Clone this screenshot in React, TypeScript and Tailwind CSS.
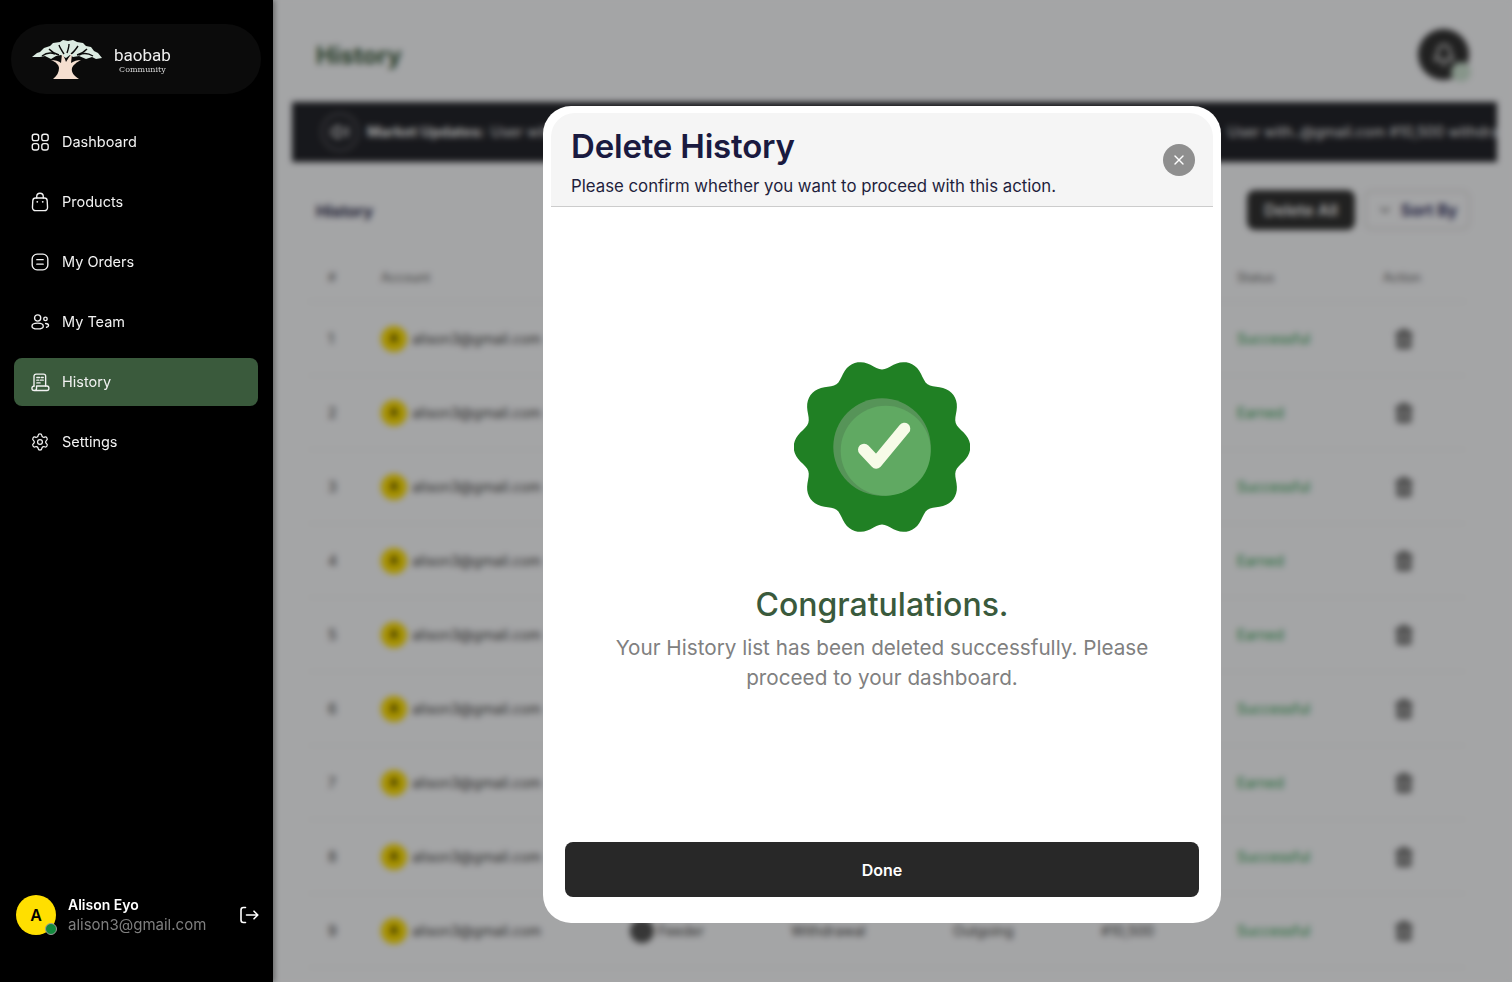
import { X, Trash2, ChevronDown, Bell, Volume2 } from "lucide-react";

const badgePath = (() => {
  const pts: string[] = [];
  for (let i = 0; i < 360; i += 2) {
    const t = (i * Math.PI) / 180;
    const r = 83.4 + 5.4 * Math.cos(10 * t) - 0.5 * Math.cos(20 * t);
    pts.push(`${(88 + r * Math.cos(t)).toFixed(2)} ${(85 + r * Math.sin(t)).toFixed(2)}`);
  }
  return `M${pts.join("L")}Z`;
})();

const icons = {
  dashboard: (
    <>
      <rect x="2.5" y="2.5" width="7" height="7" rx="2.4" />
      <rect x="13" y="2.5" width="7" height="7" rx="2.4" />
      <rect x="2.5" y="12.8" width="7" height="7" rx="2.4" />
      <rect x="13" y="12.8" width="7" height="7" rx="2.4" />
    </>
  ),
  products: (
    <>
      <path d="M6.2 6.6h9.6c1.7 0 3 1.2 3.1 2.9l.4 7.4c.1 2-1.4 3.6-3.4 3.6H6.1c-2 0-3.5-1.6-3.4-3.6l.4-7.4c.1-1.7 1.4-2.9 3.1-2.9Z" />
      <path d="M7.4 6.6V5a3.6 3.6 0 0 1 7.2 0v1.6" />
      <path d="M8 10.8h.01M14 10.8h.01" strokeWidth="2" />
    </>
  ),
  orders: (
    <>
      <rect x="2.4" y="2.4" width="17.2" height="17.2" rx="5.4" />
      <path d="M7.5 8.4h7M7.5 13.4h7" />
    </>
  ),
  team: (
    <>
      <circle cx="8.4" cy="6.6" r="3.4" />
      <path d="M2.2 15.6c0-2.2 2.8-3.4 6.2-3.4s6.2 1.2 6.2 3.4-2.8 3-6.2 3-6.2-.8-6.2-3Z" />
      <circle cx="17" cy="7.6" r="1.9" />
      <path d="M17.2 12.6c2 .1 3.2 1 3.2 2.2 0 1-.8 1.7-2.2 2" />
    </>
  ),
  history: (
    <>
      <path d="M4.4 15.6V4.6c0-1.4.9-2.3 2.3-2.3h8.2c1.4 0 2.3.9 2.3 2.3v10.8" />
      <path d="M4.6 20.4h14c1.3 0 2.2-.9 2.2-2.5 0-1.5-.9-2.5-2.2-2.5H7.2v2.6c0 1.4-1.2 2.4-2.5 2.4s-2.6-1-2.6-2.4 1-2.5 2.3-2.5" />
      <path d="M7.5 6h3M12.4 6h2.2M7.5 9h2M11.4 9h3.2M7.5 12h3.6" />
    </>
  ),
  settings: (
    <g transform="translate(.3 .3) scale(.89)">
      <circle cx="12" cy="12" r="3" />
      <path d="M9.671 4.136a2.34 2.34 0 0 1 4.659 0 2.34 2.34 0 0 0 3.319 1.915 2.34 2.34 0 0 1 2.33 4.033 2.34 2.34 0 0 0 0 3.831 2.34 2.34 0 0 1-2.33 4.033 2.34 2.34 0 0 0-3.319 1.915 2.34 2.34 0 0 1-4.659 0 2.34 2.34 0 0 0-3.32-1.915 2.34 2.34 0 0 1-2.33-4.033 2.34 2.34 0 0 0 0-3.831A2.34 2.34 0 0 1 6.35 6.051a2.34 2.34 0 0 0 3.32-1.915" />
    </g>
  ),
};

const NavItem = ({
  icon,
  label,
  active,
}: {
  icon: keyof typeof icons;
  label: string;
  active?: boolean;
}) => (
  <div
    className={`h-12 flex items-center gap-3 pl-4 rounded-lg text-[14.5px] text-[#f2f2f2] ${
      active ? "bg-[#3a5a3c]" : ""
    }`}
  >
    <svg
      viewBox="0 0 22 22"
      fill="none"
      stroke="currentColor"
      strokeWidth="1.5"
      strokeLinecap="round"
      strokeLinejoin="round"
      className="w-5 h-5 shrink-0"
    >
      {icons[icon]}
    </svg>
    <span>{label}</span>
  </div>
);

const Logo = () => (
  <svg viewBox="0 0 70 40" className="w-[70px] h-10 shrink-0">
    {/* canopy */}
    <path
      d="M0 18 5 14l3-1 4-4 6-2 3-3 7-1 3-2 5 1 5-1 4 2 6 1 3 3 5 1 3 4 4 2 4 5-6 1-4-2-6 2-7-3-6 1-3-2-4 3-5-3-5 1-5 3-6-3-5 1-4 0Z"
      fill="#dcebe2"
    />
    {/* dark gaps in the foliage */}
    <path
      d="M10 17c4-3 8-4 13-2M17 10c3 3 6 5 10 6M27 6c1 3 3 6 5 9M37 5c0 3-1 6-2 9M46 7c-2 3-4 6-7 8M55 10c-3 3-6 5-10 6M61 17c-5-3-10-3-14-1"
      stroke="#0b0b0b"
      strokeWidth="1.4"
      fill="none"
    />
    {/* trunk */}
    <path
      d="M21 40c4-3 6-7 6-11 0-3-3-6-8-8 4 0 8 1 10 3l1-9c2 2 3 5 4 8 2-3 3-6 6-8l-1 9c3-2 6-3 10-3-4 2-8 5-9 8-1 4 2 8 7 11Z"
      fill="#f5dfd0"
    />
  </svg>
);

const rows = [
  "Successful",
  "Earned",
  "Successful",
  "Earned",
  "Earned",
  "Successful",
  "Earned",
  "Successful",
  "Successful",
];

export default function App() {
  return (
    <div className="flex h-screen w-full overflow-hidden bg-white font-['Inter',sans-serif]">
      <aside className="relative z-20 w-[273px] shrink-0 h-full bg-black flex flex-col shadow-[2px_0_5px_rgba(0,0,0,0.35)]">
        <div className="mt-6 ml-[11px] w-[250px] h-[70px] rounded-full bg-[#0b0b0b] flex items-center pl-[21px] gap-3">
          <Logo />
          <div className="flex flex-col items-center text-[#eeeeee] leading-none mt-[3px]">
            <span className="font-['Roboto',sans-serif] text-[17px]">baobab</span>
            <span className="font-['DejaVu_Serif',serif] text-[8px] mt-[2px] text-[#d8d8d8]">Community</span>
          </div>
        </div>

        <nav className="mt-6 mx-[14px] w-[244px] flex flex-col gap-3">
          <NavItem icon="dashboard" label="Dashboard" />
          <NavItem icon="products" label="Products" />
          <NavItem icon="orders" label="My Orders" />
          <NavItem icon="team" label="My Team" />
          <NavItem icon="history" label="History" active />
          <NavItem icon="settings" label="Settings" />
        </nav>

        <div className="mt-auto mb-[47px] ml-4 mr-[14px] flex items-center">
          <div className="relative w-10 h-10 rounded-full bg-[#ffdf00] flex items-center justify-center text-black font-semibold text-base">
            A
            <span className="absolute right-[-1px] bottom-0 w-3 h-3 rounded-full bg-[#128a3e] border border-[#9a9a9a]" />
          </div>
          <div className="ml-3 flex flex-col">
            <span className="text-[14px] leading-5 font-semibold text-white">Alison Eyo</span>
            <span className="text-[15px] leading-5 text-[#7f7f7f]">alison3@gmail.com</span>
          </div>
          <svg
            viewBox="0 0 20 20"
            fill="none"
            stroke="#fff"
            strokeWidth="1.6"
            strokeLinecap="round"
            strokeLinejoin="round"
            className="ml-auto w-5 h-5"
          >
            <path d="M6.5 2.5H4.4C3.1 2.5 2 3.6 2 4.9v10.2c0 1.3 1.1 2.4 2.4 2.4h2.1" />
            <path d="M7.5 10h11M15 6.2l3.8 3.8-3.8 3.8" />
          </svg>
        </div>
      </aside>

      <main className="relative flex-1 min-w-0 h-full overflow-hidden bg-[#fcfdff]">
        <header className="h-[102px] flex items-center pl-[43px] pr-[43px]">
          <h1 className="text-[24px] font-bold text-[#3a5a3c] mt-[10px]">History</h1>
          <div className="relative ml-auto mt-[7px] w-[51px] h-[51px] rounded-full bg-[#333] flex items-center justify-center">
            <Bell className="size-6 text-white" />
            <span className="absolute right-[-2px] bottom-[-2px] w-5 h-5 rounded-full bg-[#cfe5d4]" />
          </div>
        </header>

        <div className="ml-[19px] mr-[15px] h-[60px] bg-[#24252b] flex items-center overflow-hidden whitespace-nowrap pl-7 text-[14.5px] text-white">
          <span className="shrink-0 w-10 h-10 rounded-full border-4 border-[#44454a] flex items-center justify-center">
            <Volume2 className="size-5 text-white" />
          </span>
          <span className="shrink-0 ml-[7px] font-bold">Market Updates:</span>
          <span className="shrink-0 ml-[6px] w-[737px]">User with..@gmail.com #10,500 withdrawal</span>
          <span className="shrink-0">User with..@gmail.com #10,500 withdrawal</span>
        </div>

        <div className="mt-7 pl-[43px] pr-[42px] h-10 flex items-center">
          <h2 className="text-[16px] font-bold text-[#2a2a4a] mt-[2px]">History</h2>
          <button className="ml-auto w-[108px] h-10 rounded-lg bg-[#333] text-white text-[16px] font-semibold">
            Delete All
          </button>
          <button className="ml-[9px] w-[106px] h-10 rounded-lg border-2 border-[#e4e4e4] bg-[#fcfdff] text-[#1a1a50] text-[16px] font-semibold flex items-center justify-center gap-2">
            <ChevronDown className="size-4 text-[#555]" />
            Sort By
          </button>
        </div>

        <div className="mt-[25px] ml-[35px] mr-[46px] text-[14px] text-[#444]">
          <div className="h-[47px] grid grid-cols-[53px_249px_161px_162px_148px_136px_1fr] items-center pl-5 text-[12.5px] text-[#666] border-b border-[#f0f0f0]">
            <span>#</span>
            <span>Account</span>
            <span>Type</span>
            <span>Category</span>
            <span>Flow</span>
            <span>Amount</span>
            <span className="flex"><span className="w-[146px]">Status</span><span>Action</span></span>
          </div>
          {rows.map((status, i) => (
            <div
              key={i}
              className="h-[74px] grid grid-cols-[53px_249px_161px_162px_148px_136px_1fr] items-center pl-5 border-b border-[#f4f4f4]"
            >
              <span>{i + 1}</span>
              <span className="flex items-center gap-[5px]">
                <span className="w-[26px] h-[26px] rounded-full bg-[#ffdf00] flex items-center justify-center text-[10px] font-semibold text-black">A</span>
                alison3@gmail.com
              </span>
              <span className="flex items-center gap-1">
                <span className="w-6 h-6 rounded-full bg-[#555]" />
                Feeder
              </span>
              <span>Withdrawal</span>
              <span>Outgoing</span>
              <span>#10,500</span>
              <span className="flex items-center">
                <span className="w-[156px] text-[#2f9e4f]">{status}</span>
                <Trash2 className="size-[22px] text-[#555] fill-[#999]" />
              </span>
            </div>
          ))}
        </div>

        {/* overlay + modal */}
        <div className="absolute inset-0 z-10 bg-[#00000059] backdrop-blur-[3px] flex items-start pl-[270px] pt-[106px]">
          <div className="w-[678px] h-[817px] bg-white rounded-[28px] px-2 pt-[7px] pb-[26px] flex flex-col">
            <div className="relative h-[94px] shrink-0 bg-[#f5f5f5] rounded-t-[24px] border-b border-[#cccccc] pl-5 pt-[11px]">
              <h3 className="text-[33px] leading-[44px] font-semibold text-[#1a1a40] tracking-[-0.2px]">Delete History</h3>
              <p className="mt-[6px] text-[16.8px] leading-6 text-[#1f1f3d]">
                Please confirm whether you want to proceed with this action.
              </p>
              <button className="absolute right-[18px] top-[31px] w-8 h-8 rounded-full bg-[#8f8f8f] flex items-center justify-center">
                <X className="size-4 text-white" />
              </button>
            </div>

            <div className="flex-1 min-h-0 pt-[5px] flex flex-col items-center justify-center">
              <svg viewBox="0 0 176 170" className="w-[176px] h-[170px] shrink-0">
                <path d={badgePath} fill="#208024" />
                <circle cx="88" cy="85" r="48.7" fill="#569458" />
                <circle cx="91.7" cy="88.7" r="45" fill="#60a962" />
                <path
                  d="M70 87.7 82.2 100.7 110.3 66.7"
                  fill="none"
                  stroke="#f7fbe8"
                  strokeWidth="12"
                  strokeLinecap="round"
                  strokeLinejoin="round"
                />
              </svg>
              <h4 className="mt-[50px] text-[32px] leading-[46px] font-medium text-[#3a5a3c]">Congratulations.</h4>
              <p className="mt-[5px] w-[556px] text-center text-[20.7px] leading-[30px] text-[#808080]">
                Your History list has been deleted successfully. Please proceed to your dashboard.
              </p>
            </div>

            <button className="mx-[14px] h-[55px] shrink-0 rounded-lg bg-[#282828] text-white text-[16px] font-semibold">
              Done
            </button>
          </div>
        </div>
      </main>
    </div>
  );
}
